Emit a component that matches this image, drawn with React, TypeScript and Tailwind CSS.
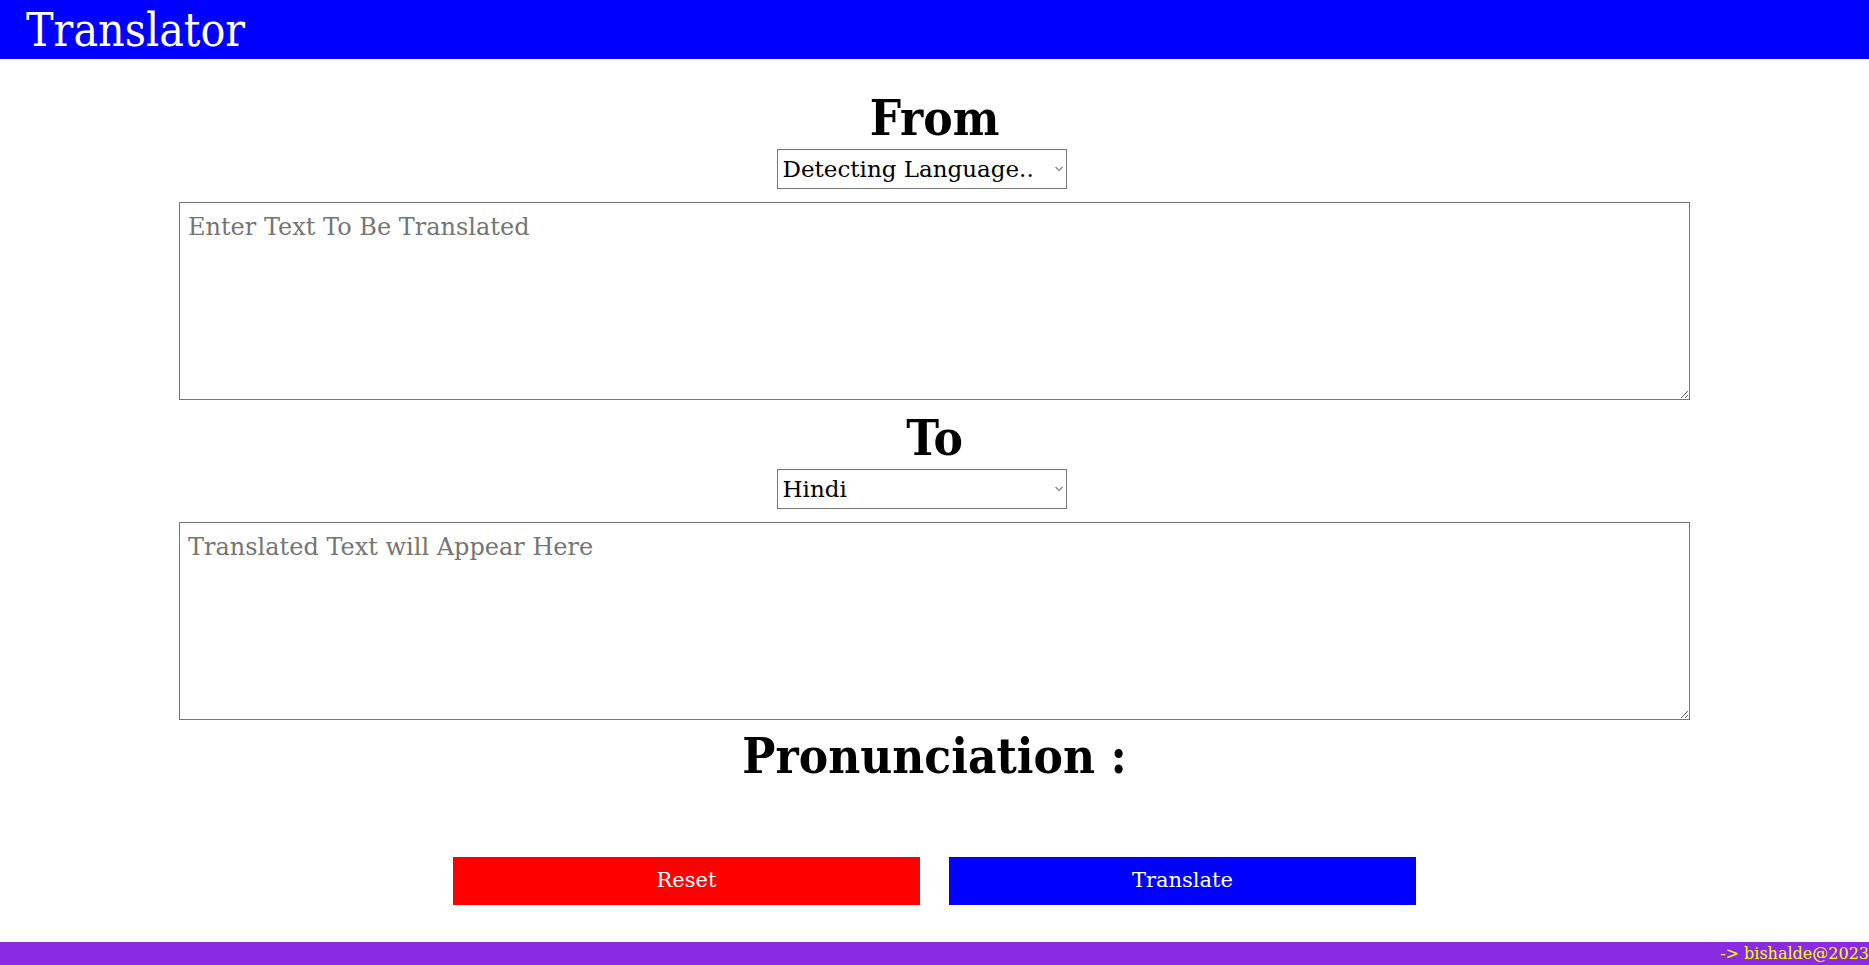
import React from "react";

function Chevron() {
  return (
    <svg
      className="pointer-events-none absolute right-[4px] top-1/2 -translate-y-1/2"
      width="8"
      height="5"
      viewBox="0 0 8 5"
      fill="none"
    >
      <path d="M0.5 0.5 L4 4 L7.5 0.5" stroke="#7a7a7a" strokeWidth="1.1" />
    </svg>
  );
}

function LangSelect({ value, options }: { value: string; options: [string, string][] }) {
  return (
    <div className="relative mr-[26px] mt-[6px] w-[290px] h-[40px]">
      <select
        defaultValue={value}
        className="appearance-none w-full h-full border border-[#767676] text-[23px] pl-[5px] pr-5 text-black bg-white"
      >
        {options.map(([v, l]) => (
          <option key={v} value={v}>
            {l}
          </option>
        ))}
      </select>
      <Chevron />
    </div>
  );
}

export default function App() {
  return (
    <div className="w-full bg-white text-black font-['DejaVu_Serif',serif] flex flex-col">
      <header className="h-[59px] bg-[#0000ff] flex items-center px-[26px]">
        <h1 className="text-white text-[46px] leading-none font-normal font-stretch-condensed">Translator</h1>
      </header>

      <main className="flex flex-col items-center">
        <h2 className="mt-[35px] text-[49px] leading-none font-bold font-stretch-condensed">From</h2>
        <LangSelect
          value="detect"
          options={[
            ["detect", "Detecting Language.."],
            ["en", "English"],
          ]}
        />
        <textarea
          placeholder="Enter Text To Be Translated"
          className="mt-[13px] w-[1511px] h-[198px] border border-[#767676] px-2 py-[6px] text-[24px] placeholder:text-[#757575]"
        />

        <h2 className="mt-[14px] text-[49px] leading-none font-bold font-stretch-condensed">To</h2>
        <LangSelect
          value="hi"
          options={[
            ["hi", "Hindi"],
            ["en", "English"],
          ]}
        />
        <textarea
          placeholder="Translated Text will Appear Here"
          className="mt-[13px] w-[1511px] h-[198px] border border-[#767676] px-2 py-[6px] text-[24px] placeholder:text-[#757575]"
        />

        <h2 className="mt-[12px] text-[49px] leading-none font-bold font-stretch-condensed">Pronunciation :</h2>

        <div className="mt-[76px] flex gap-[29px]">
          <button className="w-[467px] h-[48px] bg-[#ff0000] text-white text-[21px]">Reset</button>
          <button className="w-[467px] h-[48px] bg-[#0000ff] text-white text-[21px]">Translate</button>
        </div>
      </main>

      <footer className="mt-[37px] h-[24px] bg-[#8a2be2] flex items-center justify-end">
        <span className="text-[#ffff00] text-[16px] leading-none">-&gt; bishalde@2023</span>
      </footer>
    </div>
  );
}
